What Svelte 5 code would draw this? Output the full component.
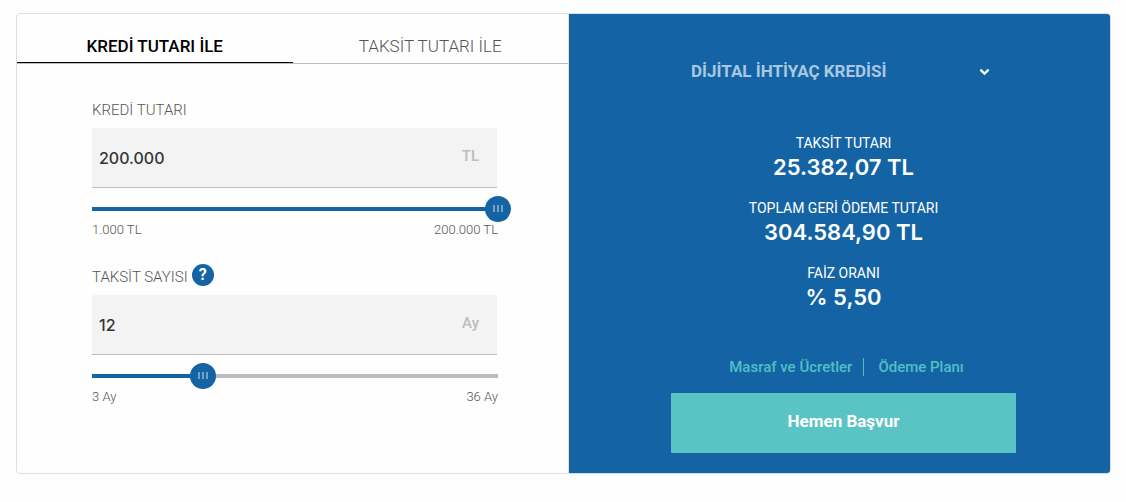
<script lang="ts">
  const tabs = ['KREDİ TUTARI İLE', 'TAKSİT TUTARI İLE'];
  let activeTab = $state(0);

  let amount = $state(200000);
  let months = $state(12);

  const minAmount = 1000;
  const maxAmount = 200000;
  const minMonths = 3;
  const maxMonths = 36;

  const format = (n: number) => String(n).replace(/\B(?=(\d{3})+$)/g, '.');
  const parse = (text: string) => Number(text.replace(/\D/g, ''));

  let amountPercent = $derived(((amount - minAmount) / (maxAmount - minAmount)) * 100);
  let monthsPercent = $derived(((months - minMonths) / (maxMonths - minMonths)) * 100);

  const results = [
    { label: 'TAKSİT TUTARI', value: '25.382,07 TL' },
    { label: 'TOPLAM GERİ ÖDEME TUTARI', value: '304.584,90 TL' },
    { label: 'FAİZ ORANI', value: '% 5,50' }
  ];
</script>

<main class="card">
  <section class="form">
    <div class="tabs" role="tablist">
      {#each tabs as tab, i}
        <button
          class="tab"
          class:active={activeTab === i}
          role="tab"
          aria-selected={activeTab === i}
          onclick={() => (activeTab = i)}
        >
          {tab}
        </button>
      {/each}
    </div>

    <div class="fields">
      <div class="group">
        <div class="label-row">
          <label for="amount">KREDİ TUTARI</label>
        </div>
        <div class="field">
          <input
            id="amount"
            type="text"
            value={format(amount)}
            onchange={(e) => (amount = parse(e.currentTarget.value))}
          />
          <span class="unit">TL</span>
        </div>
        <div class="slider" style="--fill: {amountPercent}%">
          <input type="range" aria-label="Kredi tutarı" min={minAmount} max={maxAmount} step="1000" bind:value={amount} />
        </div>
        <div class="limits">
          <span>1.000 TL</span>
          <span>200.000 TL</span>
        </div>
      </div>

      <div class="group">
        <div class="label-row">
          <label for="months">TAKSİT SAYISI</label>
          <button class="help">?</button>
        </div>
        <div class="field">
          <input
            id="months"
            type="text"
            value={months}
            onchange={(e) => (months = parse(e.currentTarget.value))}
          />
          <span class="unit">Ay</span>
        </div>
        <div class="slider" style="--fill: {monthsPercent}%">
          <input type="range" aria-label="Taksit sayısı" min={minMonths} max={maxMonths} bind:value={months} />
        </div>
        <div class="limits">
          <span>3 Ay</span>
          <span>36 Ay</span>
        </div>
      </div>
    </div>
  </section>

  <section class="summary">
    <div class="product">
      <select aria-label="Kredi türü">
        <option>DİJİTAL İHTİYAÇ KREDİSİ</option>
      </select>
      <svg width="11" height="8" viewBox="0 0 11 8" aria-hidden="true">
        <path d="M1.4 1.6 L5.5 5.6 L9.6 1.6" fill="none" stroke="#fff" stroke-width="2.2" />
      </svg>
    </div>

    <dl class="results">
      {#each results as result}
        <div>
          <dt>{result.label}</dt>
          <dd>{result.value}</dd>
        </div>
      {/each}
    </dl>

    <nav class="links">
      <a href="#masraf">Masraf ve Ücretler</a>
      <a href="#plan">Ödeme Planı</a>
    </nav>

    <button class="apply">Hemen Başvur</button>
  </section>
</main>

<style>
  :global(body) {
    background: #fefefe;
  }

  .card,
  button,
  input,
  select {
    font-family: Roboto, 'Liberation Sans', sans-serif;
  }

  .card {
    display: grid;
    grid-template-columns: 552fr 541fr;
    margin: 13px 15px 28px 16px;
    border: 1px solid #dcdee0;
    border-radius: 4px;
    overflow: hidden;
  }

  .form {
    border-right: 1px solid #dcdee0;
  }

  .tabs {
    display: flex;
    border-bottom: 1px solid #bdbdbd;
  }

  .tab {
    flex: 1;
    height: 49px;
    padding: 17px 0 0;
    border: 0;
    border-bottom: 1px solid transparent;
    background: none;
    color: #555;
    font-size: 17px;
    font-weight: 300;
    line-height: 31px;
    cursor: pointer;
  }

  .tab.active {
    border-bottom-color: #000;
    color: #000;
    font-weight: 500;
  }

  .fields {
    display: grid;
    gap: 26px;
    padding: 33px 70px 32px 75px;
  }

  .label-row {
    display: flex;
    align-items: center;
    gap: 4px;
    height: 22px;
    margin-bottom: 9px;
    color: #555;
    font-size: 15px;
    font-weight: 300;
  }

  .label-row label {
    padding-top: 4px;
  }

  .help {
    width: 22px;
    height: 22px;
    padding: 0;
    border: 0;
    border-radius: 50%;
    background: #1464a5;
    color: #fff;
    font-size: 16px;
    font-weight: 700;
    line-height: 22px;
    cursor: pointer;
  }

  .field {
    display: flex;
    align-items: center;
    height: 59px;
    margin-right: 1px;
    border-bottom: 1px solid #bdbdbd;
    border-radius: 2px 2px 0 0;
    background: #f3f3f3;
  }

  .field input {
    flex: 1;
    min-width: 0;
    padding: 0 7px;
    border: 0;
    background: none;
    color: #333;
    font-family: Inter, Roboto, sans-serif;
    font-size: 16px;
    font-weight: 500;
  }

  .unit {
    padding: 0 18px 4px 0;
    color: #bdbdbd;
    font-size: 15px;
    font-weight: 500;
  }

  .slider {
    height: 26px;
    margin-top: 8px;
    background: linear-gradient(to right, #1464a5 var(--fill), #bdbdbd var(--fill)) center / 100% 4px no-repeat;
  }

  /* the thumb centre runs from one end of the track to the other */
  .slider input {
    display: block;
    width: calc(100% + 26px);
    height: 26px;
    margin: 0 -13px;
    appearance: none;
    background: none;
    cursor: pointer;
  }

  .slider input::-webkit-slider-thumb {
    width: 26px;
    height: 26px;
    appearance: none;
    border-radius: 50%;
    background:
      linear-gradient(#72a2c9, #72a2c9) 8px 9px / 2px 7px no-repeat,
      linear-gradient(#72a2c9, #72a2c9) 12px 9px / 2px 7px no-repeat,
      linear-gradient(#72a2c9, #72a2c9) 16px 9px / 2px 7px no-repeat,
      #1464a5;
  }

  .limits {
    display: flex;
    justify-content: space-between;
    color: #555;
    font-size: 13px;
    font-weight: 300;
    line-height: 16px;
  }

  .summary {
    padding: 43px 94px 20px 102px;
    background: #1464a5;
    color: #fff;
  }

  .product {
    display: flex;
    align-items: center;
    padding: 0 26px 0 20px;
  }

  .product select {
    flex: 1;
    height: 28px;
    padding: 0;
    border: 0;
    appearance: none;
    background: none;
    color: #a9c7e0;
    font-size: 17px;
    font-weight: 700;
  }

  .product svg {
    margin-top: 2px;
  }

  .results {
    display: grid;
    gap: 17px;
    margin: 48px 0 47px;
    text-align: center;
  }

  .results dt {
    font-size: 14px;
    line-height: 20px;
  }

  .results dd {
    margin: 0;
    font-family: Inter, Roboto, sans-serif;
    font-size: 22px;
    font-weight: 600;
    line-height: 28px;
  }

  .links {
    display: flex;
    justify-content: center;
    margin-bottom: 17px;
    padding-left: 6px;
    line-height: 18px;
  }

  .links a {
    padding-right: 11px;
    color: #4fc0c4;
    font-size: 15px;
    font-weight: 500;
    text-decoration: none;
  }

  .links a + a {
    padding: 0 0 0 14px;
    border-left: 1px solid #4fc0c4;
  }

  .apply {
    width: 100%;
    height: 60px;
    padding: 0 0 5px;
    border: 0;
    border-radius: 1px;
    background: #5ac3c3;
    color: #fff;
    font-size: 17px;
    font-weight: 700;
    cursor: pointer;
  }
</style>
